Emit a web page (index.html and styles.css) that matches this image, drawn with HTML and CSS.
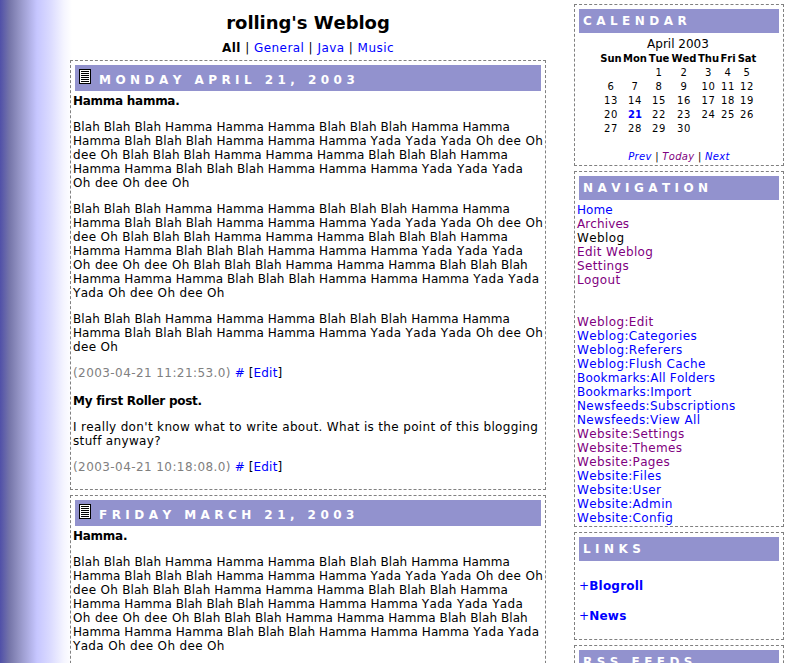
FILE: index.html
```html
<!DOCTYPE html>
<html lang="en">
<head>
<meta charset="utf-8">
<title>rolling's Weblog</title>
<link rel="stylesheet" href="styles.css">
</head>
<body>
<div class="page">
<main class="main">
<h1><span>rolling's Weblog</span></h1>
<div class="cats"><b>All</b> | <a>General</a> | <a>Java</a> | <a>Music</a></div>
<section class="box day">
<h2 class="bar"><svg class="doc" viewBox="0 0 12 15" width="12" height="15" shape-rendering="crispEdges"><path d="M0 0h12v15H0z" fill="#000"/><path d="M1 1h10v13H1z" fill="#fff"/><path d="M2 2h8v1H2zM2 4h8v1H2zM2 6h8v1H2zM2 8h8v1H2zM2 10h8v1H2zM2 12h8v1H2z" fill="#000"/></svg><span>MONDAY APRIL 21, 2003</span></h2>
<h3>Hamma hamma.</h3>
<p>Blah Blah Blah Hamma Hamma Hamma Blah Blah Blah Hamma Hamma<br>Hamma Blah Blah Blah Hamma Hamma Hamma <span class="w">Yada Yada Yada Oh dee Oh</span><br><span class="w">dee Oh</span> Blah Blah Blah Hamma Hamma Hamma Blah Blah Blah Hamma<br>Hamma Hamma Blah Blah Blah Hamma Hamma Hamma <span class="w">Yada Yada Yada</span><br><span class="w">Oh dee Oh dee Oh</span></p>
<p>Blah Blah Blah Hamma Hamma Hamma Blah Blah Blah Hamma Hamma<br>Hamma Blah Blah Blah Hamma Hamma Hamma <span class="w">Yada Yada Yada Oh dee Oh</span><br><span class="w">dee Oh</span> Blah Blah Blah Hamma Hamma Hamma Blah Blah Blah Hamma<br>Hamma Hamma Blah Blah Blah Hamma Hamma Hamma <span class="w">Yada Yada Yada</span><br><span class="w">Oh dee Oh dee Oh</span> Blah Blah Blah Hamma Hamma Hamma Blah Blah Blah<br>Hamma Hamma Hamma Blah Blah Blah Hamma Hamma Hamma <span class="w">Yada Yada</span><br><span class="w">Yada Oh dee Oh dee Oh</span></p>
<p>Blah Blah Blah Hamma Hamma Hamma Blah Blah Blah Hamma Hamma<br>Hamma Blah Blah Blah Hamma Hamma Hamma <span class="w">Yada Yada Yada Oh dee Oh</span><br><span class="w">dee Oh</span></p>
<div class="meta"><span>(2003-04-21 11:21:53.0)</span> <a>#</a> [<a>Edit</a>]</div>
<h3 class="next">My first Roller post.</h3>
<p class="post">I really don't know what to write about. What is the point of this blogging<br>stuff anyway?</p>
<div class="meta"><span>(2003-04-21 10:18:08.0)</span> <a>#</a> [<a>Edit</a>]</div>
</section>
<section class="box day">
<h2 class="bar"><svg class="doc" viewBox="0 0 12 15" width="12" height="15" shape-rendering="crispEdges"><path d="M0 0h12v15H0z" fill="#000"/><path d="M1 1h10v13H1z" fill="#fff"/><path d="M2 2h8v1H2zM2 4h8v1H2zM2 6h8v1H2zM2 8h8v1H2zM2 10h8v1H2zM2 12h8v1H2z" fill="#000"/></svg><span>FRIDAY MARCH 21, 2003</span></h2>
<h3>Hamma.</h3>
<p>Blah Blah Blah Hamma Hamma Hamma Blah Blah Blah Hamma Hamma<br>Hamma Blah Blah Blah Hamma Hamma Hamma <span class="w">Yada Yada Yada Oh dee Oh</span><br><span class="w">dee Oh</span> Blah Blah Blah Hamma Hamma Hamma Blah Blah Blah Hamma<br>Hamma Hamma Blah Blah Blah Hamma Hamma Hamma <span class="w">Yada Yada Yada</span><br><span class="w">Oh dee Oh dee Oh</span> Blah Blah Blah Hamma Hamma Hamma Blah Blah Blah<br>Hamma Hamma Hamma Blah Blah Blah Hamma Hamma Hamma <span class="w">Yada Yada</span><br><span class="w">Yada Oh dee Oh dee Oh</span></p>
</section>
</main>
<aside class="side">
<section class="box calendar">
<h2 class="bar">CALENDAR</h2>
<div class="month">April 2003</div>
<div class="grid">
<b>Sun</b><b>Mon</b><b>Tue</b><b>Wed</b><b>Thu</b><b>Fri</b><b>Sat</b>
<i></i><i></i><i>1</i><i>2</i><i>3</i><i>4</i><i>5</i>
<i>6</i><i>7</i><i>8</i><i>9</i><i>10</i><i>11</i><i>12</i>
<i>13</i><i>14</i><i>15</i><i>16</i><i>17</i><i>18</i><i>19</i>
<i>20</i><i class="today">21</i><i>22</i><i>23</i><i>24</i><i>25</i><i>26</i>
<i>27</i><i>28</i><i>29</i><i>30</i>
</div>
<div class="pager"><a>Prev</a> <span>|</span> <a class="v">Today</a> <span>|</span> <a>Next</a></div>
</section>
<section class="box nav">
<h2 class="bar">NAVIGATION</h2>
<ul>
<li class="tight"><a>Home</a></li><li class="tight"><a class="v">Archives</a></li><li>Weblog</li><li><a class="v">Edit Weblog</a></li><li><a class="v">Settings</a></li><li><a class="v">Logout</a></li>
</ul>
<ul class="menu">
<li><a class="v">Weblog:Edit</a></li><li><a>Weblog:Categories</a></li><li><a>Weblog:Referers</a></li><li><a>Weblog:Flush Cache</a></li><li class="mid"><a>Bookmarks:All Folders</a></li><li class="mid"><a>Bookmarks:Import</a></li><li><a>Newsfeeds:Subscriptions</a></li><li><a>Newsfeeds:View All</a></li><li><a class="v">Website:Settings</a></li><li><a class="v">Website:Themes</a></li><li><a class="v">Website:Pages</a></li><li><a>Website:Files</a></li><li><a>Website:User</a></li><li><a>Website:Admin</a></li><li><a>Website:Config</a></li>
</ul>
</section>
<section class="box links">
<h2 class="bar">LINKS</h2>
<div class="folder"><a>+<b>Blogroll</b></a></div>
<div class="folder"><a>+<b>News</b></a></div>
</section>
<section class="box rss">
<h2 class="bar">RSS FEEDS</h2>
</section>
</aside>
</div>
</body>
</html>
```
FILE: styles.css
```css
* { box-sizing: border-box; }
html, body { margin: 0; height: 663px; overflow: hidden; }
body {
  font: 12px/14px "DejaVu Sans", sans-serif;
  font-kerning: none;
  color: #000;
  background: linear-gradient(90deg, #5050a8 0, #7777aa 10px, #9393c4 19px, #c6c6ff 37px, #dadaff 50px, #f5f5ff 64px, #fff 72px) #fff;
}
.page { display: flex; gap: 28px; height: 663px; overflow: hidden; padding-left: 70px; white-space: nowrap; }
.main { width: 476px; }
.side { width: 210px; padding-top: 4px; display: flex; flex-direction: column; gap: 5px; }
.side > * { flex-shrink: 0; }
h1, h2, h3, p, ul { margin: 0; padding: 0; }
a { color: #00f; }
a.v { color: #800080; }
h1 { font-size: 18px; line-height: 22px; padding-top: 12px; text-align: center; letter-spacing: -0.05px; }
.cats { text-align: center; margin-top: 7px; height: 19px; letter-spacing: 0.45px; }
.box { border: 1px dashed #808080; }
.day { height: 430px; padding: 4px 2px; margin-bottom: 5px; }
.bar {
  background: #9292ce;
  color: #fff;
  font-size: 12px;
  letter-spacing: 4.45px;
  line-height: 24px;
}
.day .bar { display: flex; height: 26px; margin: 0 2px 3px; padding: 4px 4px 0; gap: 8px; }
.day .bar span { line-height: 22px; }
.doc { display: block; }
h3 { font-size: 12px; line-height: 14px; letter-spacing: -0.27px; }
h3.next { margin-top: 14px; }
p { margin: 12px 0; letter-spacing: 0.07px; }
p .w { letter-spacing: 0.34px; }
p.post { letter-spacing: 0.34px; }
.meta span { color: #808080; letter-spacing: 0.42px; }
.meta a { letter-spacing: 0.2px; }
.side .bar { height: 24px; margin: 4px 4px 0; padding-left: 4px; }
.calendar { height: 162px; }
.month { text-align: center; line-height: 14px; margin-top: 4px; padding-right: 2px; }
.grid {
  display: grid;
  grid-template-columns: 24px 24px 24px 26px 23px 16px 22px;
  grid-auto-rows: 14px;
  margin: 1px 0 0 24px;
  font-size: 10px;
  text-align: center;
  justify-items: center;
}
.grid i { font-style: normal; letter-spacing: 0.6px; }
.grid .today { color: #00f; font-weight: bold; letter-spacing: 0; }
.pager { font-size: 10px; font-style: italic; text-align: center; margin-top: 14px; letter-spacing: 0.3px; }
.pager span { font-style: normal; }
.nav { height: 356px; }
.nav ul { list-style: none; padding-left: 2px; margin-top: 3px; letter-spacing: 0.37px; }
.nav .menu { margin-top: 28px; }
.nav .tight { letter-spacing: 0.1px; }
.nav .mid { letter-spacing: 0.22px; }
.links { height: 108px; }
.folder { margin: 18px 0 0 4px; letter-spacing: 0.2px; }
.folder + .folder { margin-top: 16px; }
.rss { height: 100px; }
```
